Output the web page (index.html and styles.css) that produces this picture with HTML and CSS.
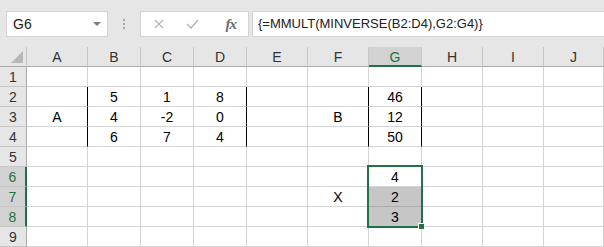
FILE: index.html
```html
<!DOCTYPE html>
<html lang="en">
<head>
    <meta charset="UTF-8">
    <title>MMULT MINVERSE</title>
    <link rel="stylesheet" href="styles.css">
</head>
<body>
    <div class="top-bar">
        <div class="name-box">
            <span>G6</span>
            <span class="drop-arrow"></span>
        </div>
        <div class="grip">
            <span></span><span></span><span></span>
        </div>
        <div class="fx-box">
            <svg class="fx-icon" width="10" height="10" viewBox="0 0 10 10">
                <path d="M1 1 L9 9 M9 1 L1 9" stroke="#b9b9b9" stroke-width="1.4" fill="none"/>
            </svg>
            <svg class="fx-icon" width="13" height="10" viewBox="0 0 13 10">
                <path d="M1 5 L5 9 L12 1" stroke="#b9b9b9" stroke-width="1.6" fill="none"/>
            </svg>
            <span class="fx">fx</span>
        </div>
        <div class="formula">{=MMULT(MINVERSE(B2:D4),G2:G4)}</div>
    </div>

    <div class="sheet">
        <div class="hd corner"><span class="corner-tri"></span></div>
        <div class="hd">A</div>
        <div class="hd">B</div>
        <div class="hd">C</div>
        <div class="hd">D</div>
        <div class="hd">E</div>
        <div class="hd">F</div>
        <div class="hd hd-sel">G</div>
        <div class="hd">H</div>
        <div class="hd">I</div>
        <div class="hd">J</div>

        <div class="rh">1</div>
        <div></div><div></div><div></div><div></div><div></div><div></div><div></div><div></div><div></div><div></div>

        <div class="rh">2</div>
        <div class="edge"></div><div>5</div><div>1</div><div class="edge">8</div><div></div><div class="edge"></div><div class="edge">46</div><div></div><div></div><div></div>

        <div class="rh">3</div>
        <div class="edge">A</div><div>4</div><div>-2</div><div class="edge">0</div><div></div><div class="edge">B</div><div class="edge">12</div><div></div><div></div><div></div>

        <div class="rh">4</div>
        <div class="edge"></div><div>6</div><div>7</div><div class="edge">4</div><div></div><div class="edge"></div><div class="edge">50</div><div></div><div></div><div></div>

        <div class="rh">5</div>
        <div></div><div></div><div></div><div></div><div></div><div></div><div></div><div></div><div></div><div></div>

        <div class="rh rh-sel">6</div>
        <div></div><div></div><div></div><div></div><div></div><div></div><div>4</div><div></div><div></div><div></div>

        <div class="rh rh-sel">7</div>
        <div></div><div></div><div></div><div></div><div></div><div>X</div><div class="filled">2</div><div></div><div></div><div></div>

        <div class="rh rh-sel">8</div>
        <div></div><div></div><div></div><div></div><div></div><div></div><div class="filled">3</div><div></div><div></div><div></div>

        <div class="rh">9</div>
        <div></div><div></div><div></div><div></div><div></div><div></div><div></div><div></div><div></div><div></div>

        <div class="selection"><span class="handle"></span></div>
    </div>
</body>
</html>
```

FILE: styles.css
```css
body {
    margin: 0;
    width: 604px;
    height: 247px;
    overflow: hidden;
    background: #ffffff;
    font-family: "Liberation Sans", Arial, sans-serif;
    color: #000000;
}

.top-bar {
    height: 47px;
    background: #e6e6e6;
    display: flex;
    align-items: flex-start;
    padding: 11px 0 0 6px;
    box-sizing: border-box;
}

.name-box {
    width: 102px;
    height: 26px;
    box-sizing: border-box;
    background: #ffffff;
    border: 1px solid #d4d4d4;
    display: flex;
    align-items: center;
    justify-content: space-between;
    padding: 0 6px 0 6px;
    font-size: 14px;
    color: #222;
}

.drop-arrow {
    width: 0;
    height: 0;
    border-left: 4px solid transparent;
    border-right: 4px solid transparent;
    border-top: 4px solid #7f7f7f;
}

.grip {
    width: 32px;
    height: 26px;
    display: flex;
    flex-direction: column;
    align-items: center;
    justify-content: center;
    gap: 2px;
}

.grip span {
    width: 2px;
    height: 2px;
    background: #a6a6a6;
}

.fx-box {
    width: 109px;
    height: 26px;
    box-sizing: border-box;
    background: #ffffff;
    border: 1px solid #d4d4d4;
    display: flex;
    align-items: center;
    padding: 0 12px 0 13px;
    gap: 0;
}

.fx-icon:first-child {
    margin-right: 22px;
}

.fx {
    margin-left: auto;
    font-family: "Liberation Serif", serif;
    font-style: italic;
    font-weight: bold;
    font-size: 15px;
    color: #6e6e6e;
    letter-spacing: -1px;
}

.formula {
    margin-left: 3px;
    flex: 1;
    height: 26px;
    box-sizing: border-box;
    background: #ffffff;
    border: 1px solid #d4d4d4;
    border-right: none;
    padding-left: 5px;
    font-size: 13px;
    line-height: 24px;
    color: #222;
    white-space: nowrap;
}

.sheet {
    position: relative;
    display: grid;
    grid-template-columns: 27px 61px 53px 53px 53px 61px 61px 53px 61px 61px 60px;
    grid-template-rows: repeat(10, 20px);
    font-size: 14px;
}

.sheet > div {
    box-sizing: border-box;
    border-right: 1px solid #d4d4d4;
    border-bottom: 1px solid #d4d4d4;
    display: flex;
    align-items: center;
    justify-content: center;
    padding-top: 1px;
}

.sheet > .hd {
    background: #e6e6e6;
    border-right-color: #c6c6c6;
    border-bottom-color: #ababab;
    color: #333;
}

.sheet > .corner {
    position: relative;
}

.corner-tri {
    position: absolute;
    right: 3px;
    bottom: 3px;
    width: 0;
    height: 0;
    border-left: 12px solid transparent;
    border-bottom: 12px solid #b8b8b8;
}

.sheet > .hd-sel {
    background: #d2d2d2;
    border-bottom: 2px solid #217346;
    padding-top: 2px;
    color: #217346;
}

.sheet > .rh {
    background: #e6e6e6;
    border-right-color: #ababab;
    border-bottom-color: #c6c6c6;
    color: #333;
}

.sheet > .rh-sel {
    background: #d2d2d2;
    border-right: 2px solid #217346;
    color: #217346;
}

.sheet > .edge {
    border-right-color: #000000;
}

.sheet > .filled {
    background: #c6c6c6;
    border-bottom-color: #ababab;
}

.sheet > .selection {
    position: absolute;
    left: 367px;
    top: 118px;
    width: 56px;
    height: 63px;
    border: 2px solid #217346;
    padding: 0;
    display: block;
}

.handle {
    position: absolute;
    right: -4px;
    bottom: -4px;
    width: 5px;
    height: 5px;
    background: #217346;
    border: 1px solid #ffffff;
}
```
